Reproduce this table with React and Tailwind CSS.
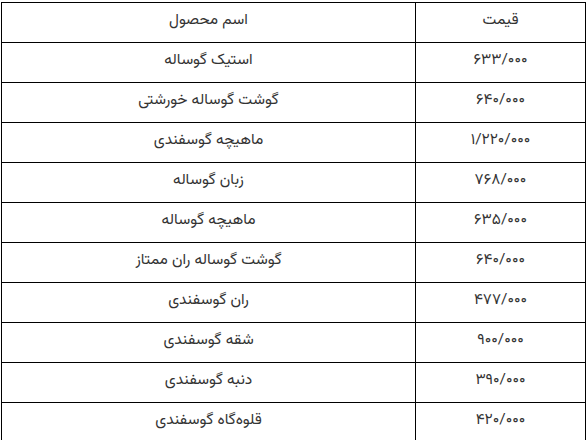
import React from 'react';

const rows = [
  ['استیک گوساله', '۶۳۳/۰۰۰'],
  ['گوشت گوساله خورشتی', '۶۴۰/۰۰۰'],
  ['ماهیچه گوسفندی', '۱/۲۲۰/۰۰۰'],
  ['زبان گوساله', '۷۶۸/۰۰۰'],
  ['ماهیچه گوساله', '۶۳۵/۰۰۰'],
  ['گوشت گوساله ران ممتاز', '۶۴۰/۰۰۰'],
  ['ران گوسفندی', '۴۷۷/۰۰۰'],
  ['شقه گوسفندی', '۹۰۰/۰۰۰'],
  ['دنبه گوسفندی', '۳۹۰/۰۰۰'],
  ['قلوه‌گاه گوسفندی', '۴۲۰/۰۰۰'],
];

export default function App() {
  return (
    <div className="bg-white w-[587px] h-[440px] overflow-hidden pt-[2px] pl-px">
      <table
        dir="rtl"
        className="w-[585px] border-collapse text-[15.5px] text-[#333] font-['Vazirmatn','DejaVu_Sans',sans-serif]"
      >
        <thead>
          <tr className="h-10">
            <th className="w-[170px] border border-black font-normal text-center align-top pt-[6px]">قیمت</th>
            <th className="border border-black font-normal text-center align-top pt-[6px]">اسم محصول</th>
          </tr>
        </thead>
        <tbody>
          {rows.map(([name, price], i) => (
            <tr key={i} className="h-10">
              <td className="border border-black text-center align-top pt-[6px]">{price}</td>
              <td className="border border-black text-center align-top pt-[6px]">{name}</td>
            </tr>
          ))}
        </tbody>
      </table>
    </div>
  );
}
